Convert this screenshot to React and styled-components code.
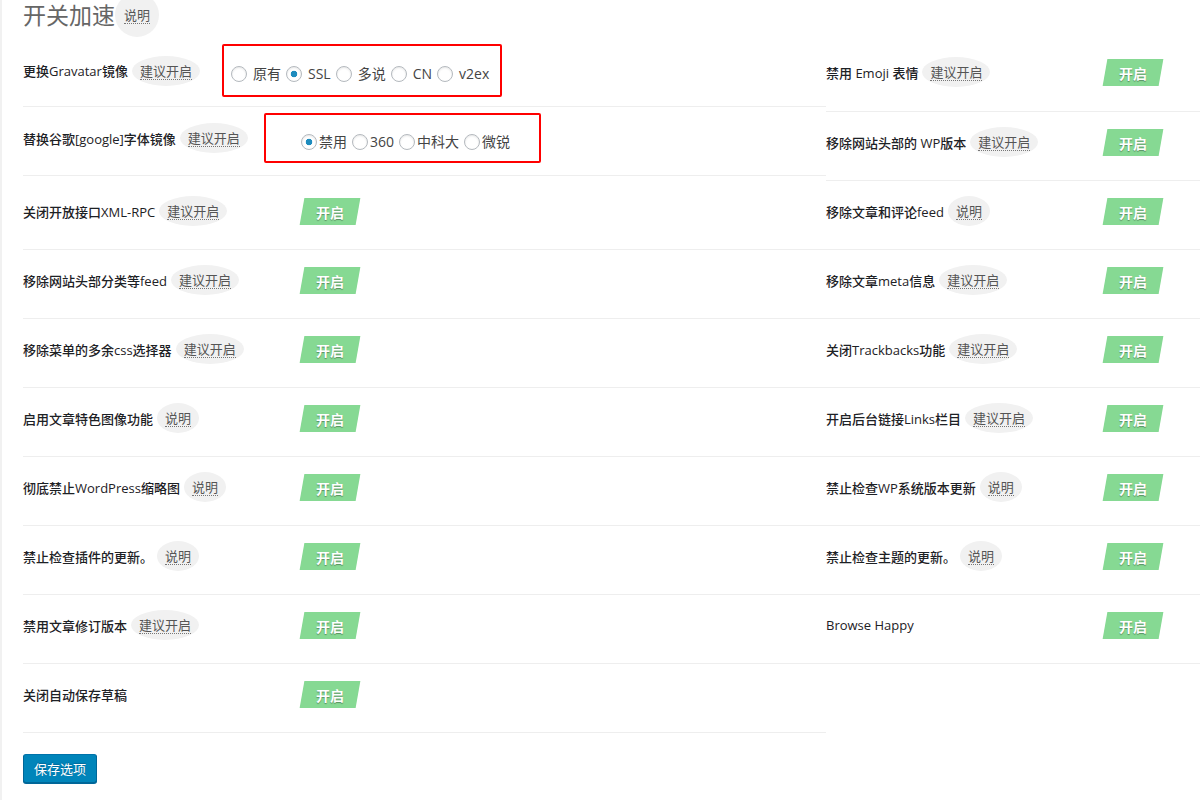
import React from 'react';
import styled, { createGlobalStyle } from 'styled-components';

const GlobalStyle = createGlobalStyle`
  html, body {
    margin: 0;
    padding: 0;
    background: #fff;
    overflow: hidden;
  }
  body {
    font-family: "Open Sans", "Noto Sans CJK SC", sans-serif;
    color: #23282d;
  }
`;

const Page = styled.div`
  width: 1200px;
  height: 800px;
  box-sizing: border-box;
  border-left: 2px solid #f1f1f1;
  padding-left: 21px;
`;

const Title = styled.div`
  display: flex;
  align-items: flex-start;
  height: 38px;
`;

const TitleText = styled.h2`
  margin: 0;
  font-size: 23px;
  font-weight: 400;
  line-height: 30px;
  color: #666;
`;

const HeadBadge = styled.span`
  width: 44px;
  height: 44px;
  margin-top: -7px;
  border-radius: 50%;
  background: #f1f1f1;
  display: flex;
  align-items: flex-end;
  justify-content: center;
  box-sizing: border-box;
  padding-bottom: 13px;
`;

const Columns = styled.div`
  display: grid;
  grid-template-columns: 803px 1fr;
  align-items: start;
`;

const Column = styled.div`
  display: flex;
  flex-direction: column;
`;

const Row = styled.div`
  display: flex;
  align-items: center;
  height: ${p => p.$h}px;
  padding-bottom: ${p => p.$pb}px;
  box-sizing: border-box;
  border-bottom: 1px solid #eee;
`;

const Label = styled.div`
  flex: none;
  width: ${p => p.$w}px;
  display: flex;
  align-items: center;
  font-size: 13px;
  font-weight: 500;
  color: #1d2125;
  white-space: nowrap;
`;

const Badge = styled.span`
  margin-left: 4px;
  padding: 6px 8px;
  border-radius: 50%;
  background: #f1f1f1;
  font-weight: 400;
`;

const Hint = styled.span`
  font-size: 13px;
  font-weight: 400;
  color: #555;
  line-height: 15px;
  border-bottom: 1px dotted #777;
  display: inline-block;
`;

const Toggle = styled.span`
  width: 56px;
  height: 27px;
  margin-left: 3px;
  background: #86d993;
  transform: skewX(-10deg);
  display: flex;
  align-items: center;
  justify-content: center;
`;

const ToggleText = styled.span`
  transform: skewX(10deg);
  color: #fff;
  font-size: 14px;
  font-weight: 700;
  text-shadow: 0 1px 1px rgba(0, 0, 0, 0.35);
`;

const RadioBox = styled.div`
  flex: none;
  width: ${p => p.$w}px;
  height: ${p => p.$h}px;
  box-sizing: border-box;
  border: 2px solid #f00;
  border-radius: 2px;
  padding: ${p => p.$pt}px 0 0 ${p => p.$pl}px;
  display: flex;
  align-items: flex-start;
`;

const Option = styled.label`
  display: flex;
  align-items: center;
  gap: ${p => p.$gap}px;
  margin-right: 5px;
  font-size: 14px;
  line-height: 16px;
  color: #444;
`;

const Radio = styled.input`
  appearance: none;
  width: 16px;
  height: 16px;
  margin: 0;
  border: 1px solid #b4b9be;
  border-radius: 50%;
  box-sizing: border-box;
  background: #fff;
  box-shadow: inset 0 1px 2px rgba(0, 0, 0, 0.1);
  &:checked {
    background: radial-gradient(circle, #1e8cbe 0 3px, #fff 3.6px);
  }
`;

const SaveButton = styled.button`
  margin-top: 21px;
  height: 29px;
  padding: 0 10px;
  background: #0085ba;
  border: 1px solid;
  border-color: #0073aa #006799 #006799;
  border-radius: 3px;
  box-shadow: 0 1px 0 #006799;
  color: #fff;
  font-family: "Open Sans", "Noto Sans CJK SC", sans-serif;
  font-size: 13px;
  text-shadow: 0 -1px 1px #006799;
`;

const leftToggles = [
  { text: '关闭开放接口XML-RPC', hint: '建议开启', h: 74, pb: 3 },
  { text: '移除网站头部分类等feed', hint: '建议开启' },
  { text: '移除菜单的多余css选择器', hint: '建议开启' },
  { text: '启用文章特色图像功能', hint: '说明' },
  { text: '彻底禁止WordPress缩略图', hint: '说明' },
  { text: '禁止检查插件的更新。', hint: '说明' },
  { text: '禁用文章修订版本', hint: '建议开启' },
  { text: '关闭自动保存草稿' },
];

const rightToggles = [
  { text: '禁用 Emoji 表情', hint: '建议开启', h: 74, pb: 5 },
  { text: '移除网站头部的 WP版本', hint: '建议开启' },
  { text: '移除文章和评论feed', hint: '说明' },
  { text: '移除文章meta信息', hint: '建议开启' },
  { text: '关闭Trackbacks功能', hint: '建议开启' },
  { text: '开启后台链接Links栏目', hint: '建议开启' },
  { text: '禁止检查WP系统版本更新', hint: '说明' },
  { text: '禁止检查主题的更新。', hint: '说明' },
  { text: 'Browse Happy' },
];

function LabelText({ text, hint, w }) {
  return (
    <Label $w={w}>
      {text}
      {hint && <Badge><Hint>{hint}</Hint></Badge>}
    </Label>
  );
}

function ToggleRow({ item }) {
  return (
    <Row $h={item.h || 69} $pb={item.pb ?? 8}>
      <LabelText text={item.text} hint={item.hint} w={276} />
      <Toggle><ToggleText>开启</ToggleText></Toggle>
    </Row>
  );
}

function RadioGroup({ name, options, checked, gap }) {
  return options.map(o => (
    <Option key={o} $gap={gap}>
      <Radio type="radio" name={name} defaultChecked={o === checked} />
      {o}
    </Option>
  ));
}

export default function App() {
  return (
    <>
      <GlobalStyle />
      <Page>
        <Title>
          <TitleText>开关加速</TitleText>
          <HeadBadge><Hint>说明</Hint></HeadBadge>
        </Title>
        <Columns>
          <Column>
            <Row $h={69} $pb={3}>
              <LabelText text="更换Gravatar镜像" hint="建议开启" w={199} />
              <RadioBox $w={280} $h={53} $pt={20} $pl={7}>
                <RadioGroup name="gravatar" options={['原有', 'SSL', '多说', 'CN', 'v2ex']} checked="SSL" gap={6} />
              </RadioBox>
            </Row>
            <Row $h={69} $pb={6}>
              <LabelText text="替换谷歌[google]字体镜像" hint="建议开启" w={241} />
              <RadioBox $w={277} $h={50} $pt={19} $pl={35}>
                <RadioGroup name="fonts" options={['禁用', '360', '中科大', '微锐']} checked="禁用" gap={2} />
              </RadioBox>
            </Row>
            {leftToggles.map(item => <ToggleRow key={item.text} item={item} />)}
            <div>
              <SaveButton>保存选项</SaveButton>
            </div>
          </Column>
          <Column>
            {rightToggles.map(item => <ToggleRow key={item.text} item={item} />)}
          </Column>
        </Columns>
      </Page>
    </>
  );
}
